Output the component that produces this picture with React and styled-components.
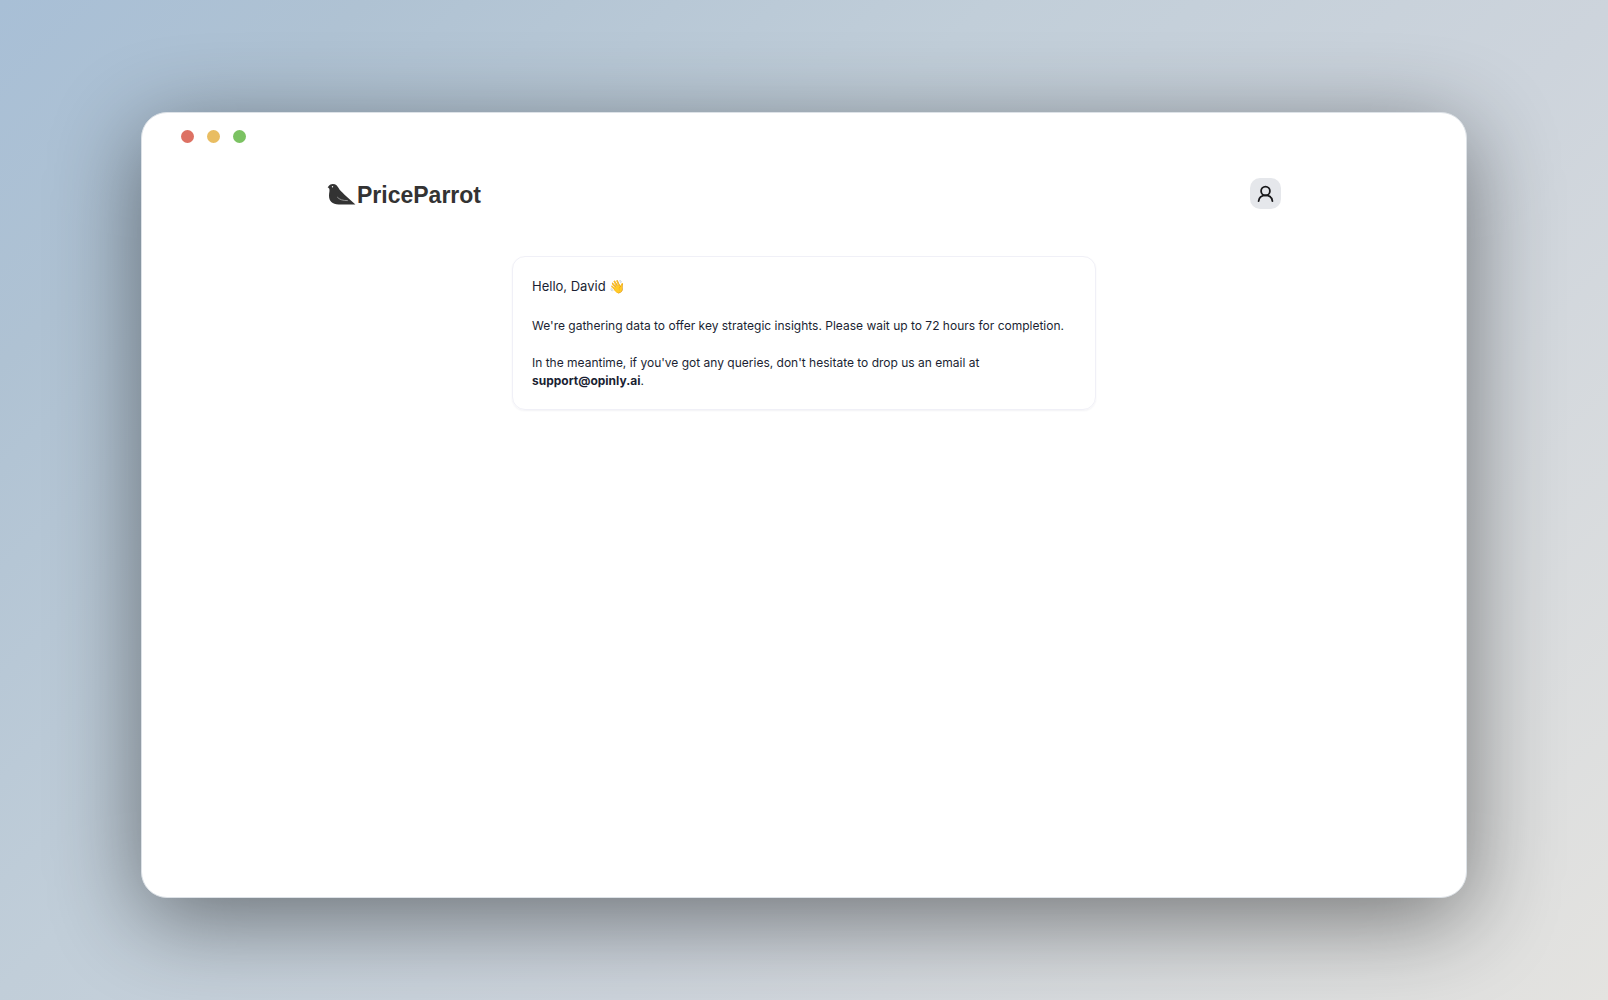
import React from 'react';
import styled, { createGlobalStyle } from 'styled-components'

const GlobalStyle = createGlobalStyle`
  * {
    box-sizing: border-box;
  }
  body {
    margin: 0;
    font-family: Inter, 'Noto Color Emoji', sans-serif;
    color: #1b1f33;
  }
`;

const Desktop = styled.div`
  min-height: 100vh;
  padding: 112px 141px 102px;
  display: flex;
  background: linear-gradient(135deg, #a8bfd6 0%, #afc2d3 14%, #c1ced9 38%, #cdd4dc 62%, #e4e3e0 100%);
`;
const BrowserWindow = styled.div`
  flex: 1;
  border: 1px solid #dde2e7;
  border-radius: 26px;
  background: #fff;
  box-shadow: 0 20px 90px rgba(0, 0, 0, 0.47);
`;
const TitleBar = styled.div`
  padding: 17px 39px;
  display: flex;
  gap: 13px;
`;
const Dot = styled.span`
  width: 13px;
  height: 13px;
  border-radius: 50%;
  background: ${props => props.$color};
`;
const Header = styled.header`
  max-width: 954px;
  margin: 18px auto 0;
  display: flex;
  align-items: flex-start;
  justify-content: space-between;
`;
const Brand = styled.a`
  display: flex;
  align-items: center;
  gap: 1px;
  color: #333;
  font-family: 'Liberation Sans', Arial, sans-serif;
  font-size: 23px;
  font-weight: 700;
  line-height: 34px;
  text-decoration: none;
`;
const ProfileButton = styled.button`
  width: 31px;
  height: 31px;
  padding: 0;
  display: flex;
  align-items: center;
  justify-content: center;
  border: 0;
  border-radius: 10px;
  background: #e5e7eb;
  color: #18181b;
  cursor: pointer;
`;
const Card = styled.main`
  max-width: 584px;
  margin: 44px auto;
  padding: 19px;
  border: 1px solid #f0f0f7;
  border-radius: 13px;
  box-shadow: 0 1px 2px rgba(30, 30, 80, 0.06);
`;
const Greeting = styled.h1`
  margin: 0 0 20px;
  font-size: 13px;
  font-weight: 400;
  line-height: 21px;
`;
const Message = styled.p`
  margin: 19px 0 0;
  font-size: 12px;
  line-height: 18px;
`;
const MailLink = styled.a`
  color: inherit;
  font-weight: 700;
  text-decoration: none;
`;

const ParrotLogo = () => (
  <svg width="29" height="24" viewBox="0 0 29 24" aria-hidden="true">
    <path fill="#333" d="M0.6 4.2C1.9 3.6 1.8 1 5.8 0.9C9 0.9 10.6 3 11.6 5.1C12.7 7.4 15.2 9.1 17.3 11.5L28.4 21.6H11.7C5.3 21.6 1.9 18.1 2 12.6C2 9.7 3 7.6 2.2 5.6C1.8 4.8 1.1 4.5 0.6 4.2Z" />
    <path fill="none" stroke="#aaa" strokeWidth="0.8" d="M10.2 14C12.4 16.6 15.6 17.6 20.8 17.6" />
    <circle cx="5.5" cy="3.8" r="0.7" fill="#fff" />
  </svg>
);

const UserIcon = () => (
  <svg width="17" height="18" viewBox="0 0 17 18" fill="none" stroke="currentColor" strokeWidth="1.8" strokeLinecap="round" aria-hidden="true">
    <circle cx="8.5" cy="6" r="4.4" />
    <path d="M1.6 16.2C2 12.7 4.8 10.4 8.5 10.4S15 12.7 15.4 16.2" />
  </svg>
);

const DOTS = ['#dd7163', '#e9bd62', '#7bc262'];

const App = () => (
  <>
    <GlobalStyle />
    <Desktop>
      <BrowserWindow>
        <TitleBar>
          {DOTS.map(color => <Dot key={color} $color={color} />)}
        </TitleBar>
        <Header>
          <Brand href="#">
            <ParrotLogo />
            PriceParrot
          </Brand>
          <ProfileButton type="button" aria-label="Profile">
            <UserIcon />
          </ProfileButton>
        </Header>
        <Card>
          <Greeting>Hello, David 👋</Greeting>
          <Message>
            We're gathering data to offer key strategic insights. Please wait up to 72 hours for completion.
          </Message>
          <Message>
            In the meantime, if you've got any queries, don't hesitate to drop us an email at{' '}
            <MailLink href="mailto:support@opinly.ai">support@opinly.ai</MailLink>.
          </Message>
        </Card>
      </BrowserWindow>
    </Desktop>
  </>
);

export default App;
